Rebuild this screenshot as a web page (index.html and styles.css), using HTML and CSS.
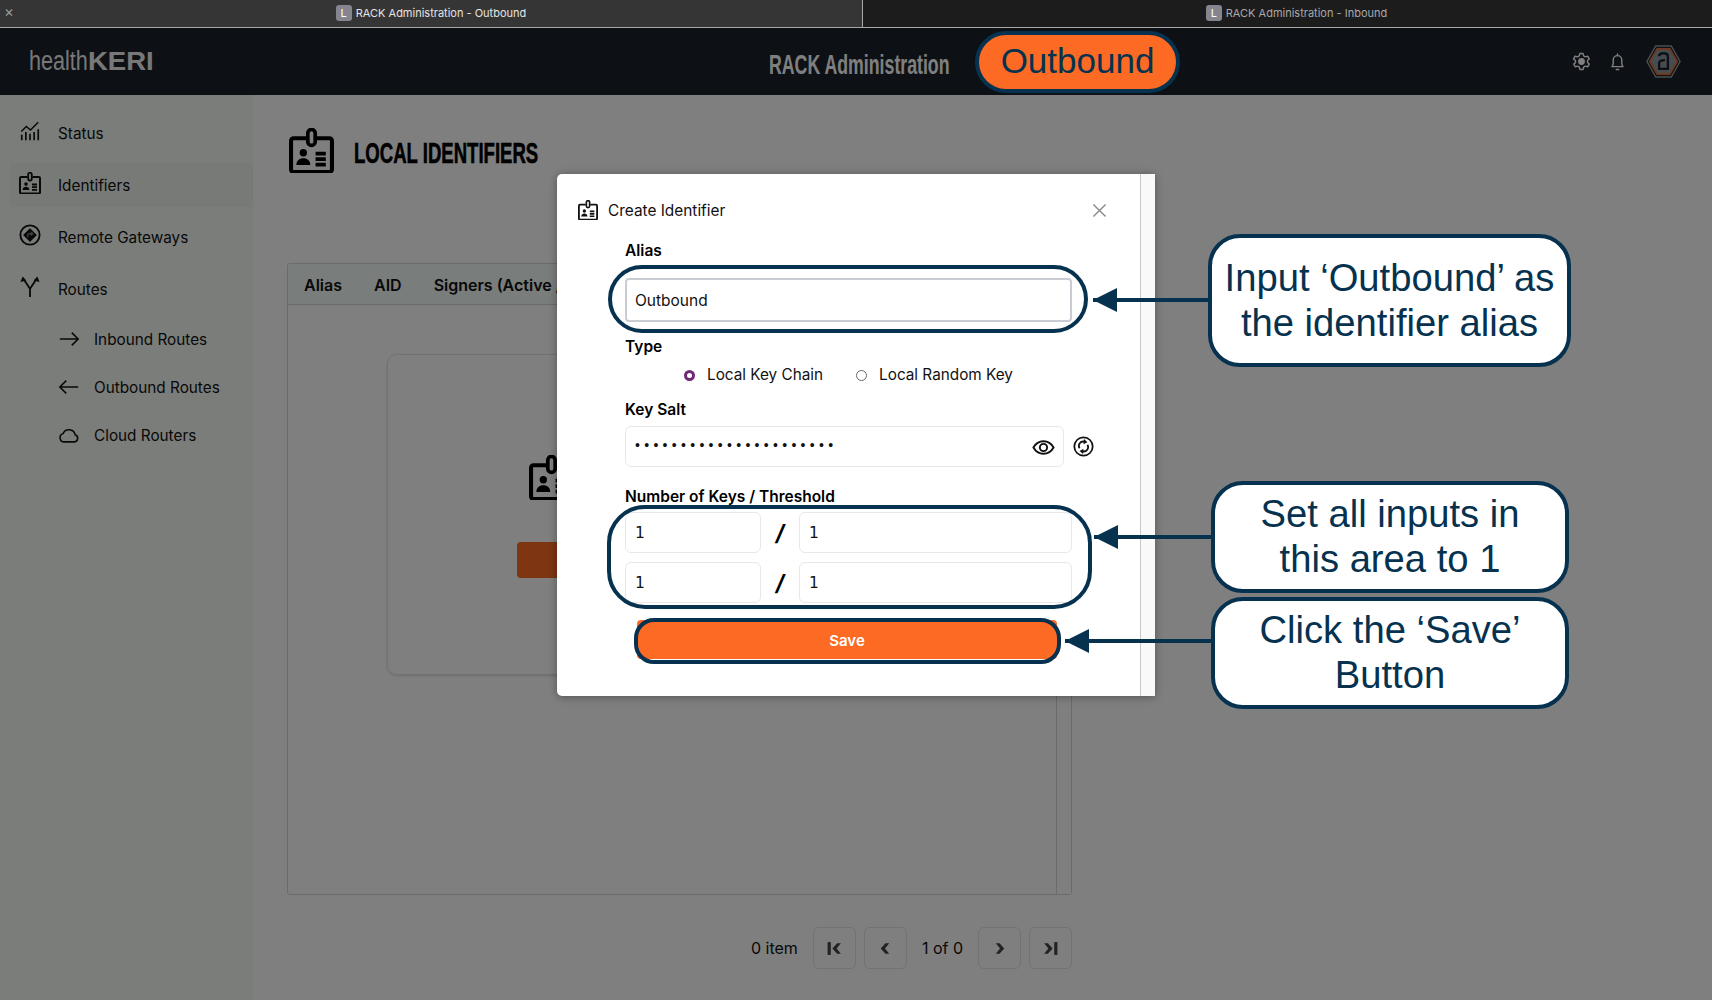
FILE: index.html
```html
<!DOCTYPE html>
<html>
<head>
  <meta charset="UTF-8">
  <title>RACK Administration - Outbound</title>
  <link rel="stylesheet" href="styles.css">
</head>
<body>
  <svg class="defs" width="0" height="0">
    <symbol id="badge" viewBox="1 0.500 22 22">
      <path d="M9.500 5.500H3.200A1.200 1.200 0 0 0 2 6.700v14.100A1.200 1.200 0 0 0 3.200 22h17.600a1.200 1.200 0 0 0 1.200-1.200V6.700a1.200 1.200 0 0 0-1.200-1.200h-6.300" fill="none" stroke="currentColor" stroke-width="2"/>
      <rect x="10.200" y="1.200" width="3.600" height="7.800" rx="1.800" fill="none" stroke="currentColor" stroke-width="1.800"/>
      <circle cx="8" cy="12.600" r="1.800" fill="currentColor"/>
      <path d="M4.600 18.600c0-2.200 1.500-3.300 3.400-3.300s3.400 1.100 3.400 3.300z" fill="currentColor"/>
      <path d="M14 13h5M14 15.700h5M14 18.400h5" stroke="currentColor" stroke-width="1.800"/>
    </symbol>
  </svg>

  <div class="tabs">
    <div class="tab tab-active">
      <span class="tab-close">&times;</span>
      <span class="tab-icon">L</span>
      <span>RACK Administration - Outbound</span>
    </div>
    <div class="tab tab-other">
      <span class="tab-icon">L</span>
      <span>RACK Administration - Inbound</span>
    </div>
  </div>

  <div class="app">
    <header class="topbar">
      <div class="logo"><span class="logo-health">health</span><span class="logo-keri">KERI</span></div>
      <div class="app-title">RACK Administration</div>
      <div class="top-icons">
        <svg class="top-icon gear" viewBox="0 0 24 24" fill="none" stroke="currentColor" stroke-width="1.800" stroke-linejoin="round"><path d="M10 2h4l.7 3 2.200 1.200 2.900-.9 2 3.400-2.200 2.100v2.400l2.200 2.100-2 3.400-2.900-.9-2.200 1.200-.7 3h-4l-.7-3-2.200-1.200-2.900.9-2-3.400 2.200-2.100v-2.400L1.900 8.700l2-3.400 2.900.9L9 5z"/><circle cx="12" cy="12" r="3.400" fill="currentColor"/></svg>
        <svg class="top-icon bell" viewBox="0 0 24 24" fill="none" stroke="currentColor" stroke-width="1.800" stroke-linecap="round" stroke-linejoin="round"><path d="M5 18.500c1.200-1.200 1.600-2.400 1.600-4.600V10a5.400 5.400 0 0 1 10.800 0v3.900c0 2.200.4 3.400 1.600 4.600z"/><path d="M12 2.500v2M10.500 22h3"/></svg>
        <svg class="avatar" viewBox="0 0 36 36"><path d="M10 2h16l9 16-9 16H10L1 18z" fill="#1a2028" stroke="#9a9a9a" stroke-width="1.500"/><path d="M11.500 5h13L32 18l-7.500 13h-13L4 18z" fill="#8f98a3" stroke="#e0703a" stroke-width="1.800"/><path d="M13.500 12.500c0-2 1.800-3 4.500-3s4.500 1 4.500 3v13h-9v-6c0-2 2-3 6-3" fill="none" stroke="#1a2028" stroke-width="2.400"/></svg>
      </div>
    </header>

    <div class="layout">
      <aside class="sidebar">
        <a class="nav-item">
          <svg class="nav-icon" viewBox="0 0 24 24" fill="none" stroke="currentColor" stroke-width="1.800"><path d="M3 22v-6M7.500 22v-9M12 22v-7M16.500 22v-9M21 22V10"/><path d="M2.500 12.500 8 7l4.500 4L21 2.500" stroke-width="1.600"/></svg>
          <span>Status</span>
        </a>
        <a class="nav-item nav-selected">
          <svg class="nav-icon"><use href="#badge"/></svg>
          <span>Identifiers</span>
        </a>
        <a class="nav-item">
          <svg class="nav-icon" viewBox="0 0 24 24" fill="none" stroke="currentColor"><circle cx="12" cy="12" r="10.500" stroke-width="2"/><path d="M12 4.500 19.500 12 12 19.500 4.500 12z" fill="currentColor" stroke="none"/><path d="M9.500 14.500v-2.300a1.500 1.500 0 0 1 1.500-1.500h3.500M13 8.800l2 1.900-2 1.900" stroke="#7b7d7a" stroke-width="1.500"/></svg>
          <span>Remote Gateways</span>
        </a>
        <a class="nav-item">
          <svg class="nav-icon" viewBox="0 0 24 24" fill="none" stroke="currentColor" stroke-width="2"><path d="M12 23v-9L6 5M12 14l6-9"/><path d="M1.500 6.500 4 .5l4 4.500zM22.500 6.500 20 .5 16 5z" fill="currentColor" stroke="none"/></svg>
          <span>Routes</span>
        </a>
        <div class="sub-nav">
          <a class="sub-item">
            <svg class="sub-icon" viewBox="0 0 24 24" fill="none" stroke="currentColor" stroke-width="1.700"><path d="M2 12h20M15 5l7 7-7 7"/></svg>
            <span>Inbound Routes</span>
          </a>
          <a class="sub-item">
            <svg class="sub-icon" viewBox="0 0 24 24" fill="none" stroke="currentColor" stroke-width="1.700"><path d="M22 12H2M9 5l-7 7 7 7"/></svg>
            <span>Outbound Routes</span>
          </a>
          <a class="sub-item">
            <svg class="sub-icon" viewBox="0 0 24 24" fill="none" stroke="currentColor" stroke-width="1.700"><path d="M7 19.500h10.500a4 4 0 0 0 1.200-7.800A7 7 0 0 0 5.500 10.500 4.600 4.600 0 0 0 7 19.500z"/></svg>
            <span>Cloud Routers</span>
          </a>
        </div>
      </aside>

      <main class="content">
        <div class="page-title">
          <svg class="title-icon"><use href="#badge"/></svg>
          <h1>LOCAL IDENTIFIERS</h1>
        </div>

        <section class="table-box">
          <div class="table-head">
            <span>Alias</span>
            <span>AID</span>
            <span>Signers (Active / Total)</span>
          </div>
          <div class="table-rest">
            <div class="table-body">
              <div class="empty-card">
                <svg class="empty-icon"><use href="#badge"/></svg>
                <div class="empty-btn"></div>
              </div>
            </div>
            <div class="table-scroll"></div>
          </div>
        </section>

        <div class="pager">
          <span class="pager-count">0 item</span>
          <span class="pager-btn"><svg viewBox="0 0 16 16" fill="#444"><path d="M1.500 2h3v12h-3z"/><path d="M14 3 10 8l4 5h-3.500L6 8l4.500-5z"/></svg></span>
          <span class="pager-btn"><svg viewBox="0 0 16 16" fill="#444"><path d="M11.500 3 7.500 8l4 5H8L3.500 8 8 3z"/></svg></span>
          <span class="pager-pages">1 of 0</span>
          <span class="pager-btn"><svg viewBox="0 0 16 16" fill="#444"><path d="M4.500 3l4 5-4 5H8l4.500-5L8 3z"/></svg></span>
          <span class="pager-btn"><svg viewBox="0 0 16 16" fill="#444"><path d="M11.500 2h3v12h-3z"/><path d="M2 3l4 5-4 5h3.500L10 8 5.500 3z"/></svg></span>
        </div>
      </main>
    </div>

    <div class="backdrop"></div>
  </div>

  <div class="modal">
    <div class="modal-main">
      <div class="modal-head">
        <svg class="modal-icon"><use href="#badge"/></svg>
        <span class="modal-title">Create Identifier</span>
        <svg class="modal-close" viewBox="0 0 16 16" fill="none" stroke="#8a8a8a" stroke-width="1.500"><path d="M1.500 1.500l13 13M14.500 1.500l-13 13"/></svg>
      </div>
      <form class="form">
        <label class="field-label label-alias">Alias</label>
        <input class="text-input input-alias" type="text" value="Outbound">
        <label class="field-label label-type">Type</label>
        <div class="radios">
          <span class="radio radio-on"></span><span class="radio-text">Local Key Chain</span>
          <span class="radio"></span><span class="radio-text">Local Random Key</span>
        </div>
        <label class="field-label label-salt">Key Salt</label>
        <div class="salt-row">
          <div class="salt-box">
            <input class="salt-input" type="text" value="••••••••••••••••••••••">
            <svg class="eye" viewBox="0 0 24 24" fill="none" stroke="#111" stroke-width="2"><path d="M1.500 12C4 7.500 7.500 5.500 12 5.500s8 2 10.500 6.500c-2.500 4.500-6 6.500-10.500 6.500S4 16.500 1.500 12z"/><circle cx="12" cy="12" r="3.800"/></svg>
          </div>
          <svg class="refresh" viewBox="0 0 24 24" fill="none" stroke="#111" stroke-width="2"><circle cx="12" cy="12" r="10.500"/><path d="M7.500 14a5 5 0 0 1 5.500-7.500M16.500 10a5 5 0 0 1-5.500 7.500"/><path d="M12.500 3.500l4 3.500-4.500 2.500zM11.500 20.500l-4-3.500 4.500-2.500z" fill="#111" stroke="none"/></svg>
        </div>
        <label class="field-label label-keys">Number of Keys / Threshold</label>
        <div class="key-row">
          <input class="text-input key-input" type="text" value="1">
          <span class="key-slash">/</span>
          <input class="text-input key-input key-wide" type="text" value="1">
        </div>
        <div class="key-row key-row-2">
          <input class="text-input key-input" type="text" value="1">
          <span class="key-slash">/</span>
          <input class="text-input key-input key-wide" type="text" value="1">
        </div>
        <button class="save-btn" type="button">Save</button>
      </form>
    </div>
    <div class="modal-scroll"></div>
  </div>

  <div class="mark pill">Outbound</div>
  <div class="mark ring ring-alias"></div>
  <div class="mark ring ring-keys"></div>
  <div class="mark ring ring-save"></div>

  <div class="mark callout callout-alias">Input ‘Outbound’ as<br>the identifier alias</div>
  <div class="mark callout callout-keys">Set all inputs in<br>this area to 1</div>
  <div class="mark callout callout-save">Click the ‘Save’<br>Button</div>

  <div class="mark arrow arrow-alias"></div>
  <div class="mark arrow arrow-keys"></div>
  <div class="mark arrow arrow-save"></div>
</body>
</html>
```

FILE: styles.css
```css
* {
  box-sizing: border-box;
}

html,
body {
  margin: 0;
  height: 1000px;
  overflow: hidden;
}

body {
  position: relative;
  font-family: Inter, "Noto Sans", sans-serif;
  font-size: 15.3px;
  color: #111;
  background: #fff;
}

.defs {
  position: absolute;
}

/* browser tabs */
.tabs {
  display: flex;
  height: 28px;
  border-bottom: 1px solid #a8a8a8;
  font-size: 11px;
}

.tab {
  position: relative;
  display: flex;
  align-items: center;
  justify-content: center;
  gap: 4px;
  padding-bottom: 2px;
}

.tab-active {
  width: 863px;
  background: #353535;
  color: #e4e4e4;
  border-right: 1px solid #a8a8a8;
}

.tab-other {
  flex: 1;
  padding-left: 18px;
  background: #1c1c1c;
  color: #a8a8a8;
}

.tab-close {
  position: absolute;
  left: 4px;
  top: 3px;
  font-size: 15px;
  line-height: 18px;
  color: #999;
}

.tab-icon {
  width: 16px;
  height: 16px;
  border-radius: 3px;
  background: #85858f;
  color: #fff;
  font-size: 11px;
  line-height: 17px;
  text-align: center;
}

/* app shell */
.app {
  position: relative;
  height: 972px;
}

.backdrop {
  position: absolute;
  inset: 0;
  background: rgba(0, 0, 0, 0.5);
}

.topbar {
  display: flex;
  align-items: center;
  height: 67px;
  padding-left: 29px;
  background: #1b2028;
  color: #fff;
}

.logo {
  display: flex;
  align-items: baseline;
  width: 124px;
  color: #f0f0f0;
  font-family: "Liberation Sans", sans-serif;
  white-space: nowrap;
}

.logo-health {
  display: inline-block;
  width: 59px;
  font-size: 27px;
  transform: scaleX(0.8);
  transform-origin: left center;
}

.logo-keri {
  display: inline-block;
  font-size: 25px;
  font-weight: 700;
  transform: scaleX(1.1);
  transform-origin: left center;
}

.app-title {
  margin-left: 616px;
  margin-top: 6px;
  font-family: "Liberation Sans", sans-serif;
  font-size: 28px;
  font-weight: 700;
  white-space: nowrap;
  transform: scaleX(0.633);
  transform-origin: left center;
}

.top-icons {
  display: flex;
  align-items: center;
  margin-left: auto;
  margin-right: 31px;
  color: #fff;
}

.top-icon {
  width: 19px;
  height: 19px;
}

.gear {
  margin-right: 17px;
}

.bell {
  margin-right: 19px;
}

.avatar {
  width: 35px;
  height: 35px;
}

.layout {
  display: flex;
  height: 905px;
}

/* sidebar */
.sidebar {
  width: 253px;
  padding: 16px 0 0 10px;
  background: #f6faf4;
}

.nav-item {
  display: flex;
  align-items: center;
  gap: 17px;
  height: 44px;
  margin-bottom: 8px;
  padding-left: 9px;
}

.nav-selected {
  background: #f0f4ee;
  border-radius: 4px 0 0 4px;
}

.nav-icon {
  width: 22px;
  height: 22px;
  margin-bottom: 4px;
}

.sub-nav {
  padding-left: 48px;
}

.sub-item {
  display: flex;
  align-items: center;
  gap: 14px;
  height: 48px;
}

.sub-item:first-child {
  margin-top: -4px;
}

.sub-icon {
  width: 22px;
  height: 22px;
}

/* main */
.content {
  flex: 1;
  padding: 33px 0 0 34px;
  background: #fff;
}

.page-title {
  display: flex;
  align-items: center;
  gap: 20px;
  height: 44px;
  padding-left: 2px;
}

.title-icon {
  width: 45px;
  height: 45px;
  color: #000;
}

.page-title h1 {
  margin: 6px 0 0;
  font-family: "Liberation Sans", sans-serif;
  font-size: 29px;
  font-weight: 700;
  color: #000;
  white-space: nowrap;
  -webkit-text-stroke: 0.6px #000;
  transform: scaleX(0.64);
  transform-origin: left center;
}

.table-box {
  display: flex;
  flex-direction: column;
  width: 785px;
  height: 632px;
  margin-top: 91px;
  border: 1px solid #d6d6d6;
  border-radius: 3px;
}

.table-head {
  display: flex;
  align-items: center;
  gap: 32px;
  height: 41px;
  padding: 2px 0 0 16px;
  background: #f2faf6;
  border-bottom: 1px solid #d6d6d6;
  font-size: 16px;
  font-weight: 600;
  white-space: nowrap;
  overflow: hidden;
  flex-shrink: 0;
}

.table-rest {
  flex: 1;
  display: flex;
}

.table-body {
  flex: 1;
  padding: 49px 0 0 99px;
}

.table-scroll {
  width: 15px;
  background: #fff;
  border-left: 1px solid #d6d6d6;
}

.empty-card {
  display: flex;
  flex-direction: column;
  width: 570px;
  height: 321px;
  padding: 100px 0 0 129px;
  border: 1px solid #e4e4e4;
  border-radius: 10px;
  box-shadow: 0 1px 3px rgba(0, 0, 0, 0.15);
}

.empty-icon {
  width: 45px;
  height: 45px;
  margin-left: 12px;
  color: #000;
}

.empty-btn {
  width: 310px;
  height: 36px;
  margin-top: 42px;
  border-radius: 4px;
  background: #fd6a23;
}

.pager {
  display: flex;
  align-items: center;
  justify-content: flex-end;
  width: 785px;
  margin-top: 32px;
  font-size: 16px;
  color: #111;
}

.pager-count {
  margin-right: 15px;
}

.pager-pages {
  margin: 0 15px 0 7px;
}

.pager-btn {
  display: flex;
  align-items: center;
  justify-content: center;
  width: 43px;
  height: 42px;
  margin-right: 8px;
  border: 1px solid #e4e4e4;
  border-radius: 6px;
}

.pager-btn:last-child {
  margin-right: 0;
}

.pager-btn svg {
  width: 17px;
  height: 17px;
}

/* modal */
.modal {
  position: absolute;
  left: 557px;
  top: 174px;
  display: flex;
  width: 598px;
  height: 522px;
  background: #fff;
  border-radius: 5px 0 0 5px;
  box-shadow: 0 1px 8px rgba(0, 0, 0, 0.35);
}

.modal-main {
  flex: 1;
  padding: 26px 0 0 21px;
}

.modal-scroll {
  width: 15px;
  background: #f9f9f9;
  border-left: 1px solid #c8c8c8;
}

.modal-head {
  display: flex;
  align-items: center;
  height: 20px;
  padding-right: 33px;
}

.modal-icon {
  width: 20px;
  height: 20px;
  color: #111;
}

.modal-title {
  margin-left: 10px;
  font-size: 15.4px;
}

.modal-close {
  width: 15px;
  height: 15px;
  margin-left: auto;
}

.form {
  display: flex;
  flex-direction: column;
  width: 447px;
  margin-left: 47px;
}

.field-label {
  font-size: 15.5px;
  font-weight: 600;
  line-height: 18px;
  color: #000;
}

.label-alias {
  margin-top: 22px;
}

.label-type {
  margin-top: 16px;
}

.label-salt {
  margin-top: 17px;
}

.label-keys {
  margin-top: 21px;
}

.text-input {
  font-family: inherit;
  font-size: 15.5px;
  color: #111;
  padding: 0 9px;
  border: 1px solid #e8e8e8;
  border-radius: 6px;
  background: #fff;
  outline: none;
}

.input-alias {
  height: 44px;
  margin-top: 18px;
  border: 2px solid #c9ccd2;
  border-radius: 4px;
  padding: 0 8px;
}

.radios {
  display: flex;
  align-items: center;
  height: 20px;
  margin-top: 8px;
  padding-left: 59px;
}

.radio {
  width: 11px;
  height: 11px;
  margin-top: 3px;
  border: 1px solid #666;
  border-radius: 50%;
  background: #fff;
}

.radio-on {
  border: 3.5px solid #6e2a73;
}

.radio-text {
  margin-left: 12px;
  margin-right: 33px;
}

.salt-row {
  display: flex;
  align-items: center;
  margin-top: 7px;
}

.salt-box {
  display: flex;
  align-items: center;
  flex-shrink: 0;
  width: 439px;
  height: 41px;
  padding: 0 8px 0 9px;
  border: 1px solid #e8e8e8;
  border-radius: 6px;
}

.salt-input {
  flex: 1;
  min-width: 0;
  border: 0;
  outline: 0;
  padding: 0 0 4px;
  font-family: "Liberation Sans", sans-serif;
  font-size: 14px;
  letter-spacing: 4.3px;
  color: #111;
}

.eye {
  width: 23px;
  height: 23px;
  margin-top: 2px;
}

.refresh {
  width: 21px;
  height: 21px;
  margin-left: 9px;
  flex-shrink: 0;
}

.key-row {
  display: flex;
  align-items: center;
  height: 41px;
  margin-top: 6px;
}

.key-row-2 {
  margin-top: 9px;
}

.key-input {
  width: 136px;
  height: 41px;
  font-family: "DejaVu Sans", sans-serif;
  font-size: 15.5px;
}

.key-wide {
  width: 273px;
}

.key-slash {
  width: 38px;
  font-size: 22px;
  font-weight: 700;
  font-style: italic;
  text-align: center;
  color: #000;
}

.save-btn {
  width: 420px;
  height: 39px;
  margin: 17px 0 0 12px;
  padding: 2px 0 0;
  border: 0;
  border-radius: 4px;
  background: #fd6a23;
  color: #fff;
  font-family: inherit;
  font-size: 15px;
  font-weight: 600;
}

/* tutorial marks drawn over the screenshot */
.mark {
  position: absolute;
}

.pill {
  left: 975px;
  top: 31px;
  width: 205px;
  height: 62px;
  border: 4px solid #06324f;
  border-radius: 31px;
  background: #fd6a23;
  color: #06324f;
  font-family: "Liberation Sans", sans-serif;
  font-size: 35px;
  line-height: 52px;
  text-align: center;
}

.ring {
  border: 4px solid #06324f;
}

.ring-alias {
  left: 608px;
  top: 265px;
  width: 480px;
  height: 68px;
  border-radius: 34px;
}

.ring-keys {
  left: 607px;
  top: 505px;
  width: 485px;
  height: 104px;
  border-radius: 38px;
}

.ring-save {
  left: 634px;
  top: 618px;
  width: 427px;
  height: 46px;
  border-radius: 20px;
}

.callout {
  display: flex;
  align-items: center;
  justify-content: center;
  padding-bottom: 2px;
  border: 4.5px solid #06324f;
  border-radius: 32px;
  background: #fff;
  color: #06324f;
  font-family: "Liberation Sans", sans-serif;
  font-size: 38.2px;
  line-height: 45px;
  text-align: center;
  white-space: nowrap;
}

.callout-alias {
  left: 1208px;
  top: 234px;
  width: 363px;
  height: 133px;
}

.callout-keys {
  left: 1211px;
  top: 481px;
  width: 358px;
  height: 112px;
}

.callout-save {
  left: 1211px;
  top: 597px;
  width: 358px;
  height: 112px;
}

.arrow {
  height: 4px;
  background: #06324f;
}

.arrow::before {
  content: "";
  position: absolute;
  left: 0;
  top: -10px;
  border-top: 12px solid transparent;
  border-bottom: 12px solid transparent;
  border-right: 24px solid #06324f;
}

.arrow-alias {
  left: 1093px;
  top: 298px;
  width: 118px;
}

.arrow-keys {
  left: 1094px;
  top: 535px;
  width: 120px;
}

.arrow-save {
  left: 1065px;
  top: 639px;
  width: 149px;
}
```
